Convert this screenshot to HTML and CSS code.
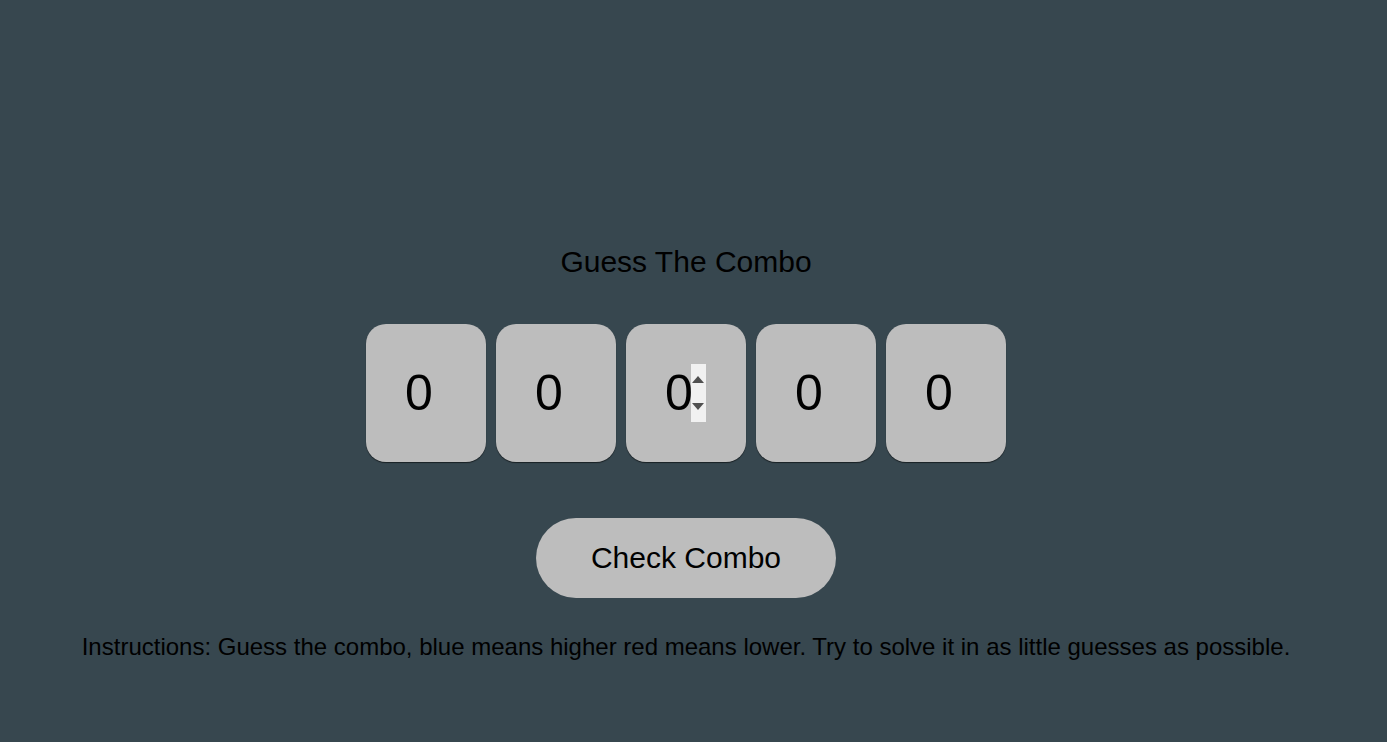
FILE: index.html
```html
<!DOCTYPE html>
<html>
<head>
<meta charset="utf-8">
<link rel="stylesheet" href="styles.css">
</head>
<body>
<main class="page">
  <h1 class="title">Guess The Combo</h1>
  <div class="digits">
    <div class="digit">0</div>
    <div class="digit">0</div>
    <div class="digit">0<span class="spinner"><span class="tri up"></span><span class="tri down"></span></span></div>
    <div class="digit">0</div>
    <div class="digit">0</div>
  </div>
  <button class="check">Check Combo</button>
  <p class="instructions">Instructions: Guess the combo, blue means higher red means lower. Try to solve it in as little guesses as possible.</p>
</main>
</body>
</html>
```
FILE: styles.css
```css
html, body {
  margin: 0;
  padding: 0;
  background: #37474f;
  height: 100%;
}
body {
  font-family: "Liberation Sans", Arial, sans-serif;
  color: #000;
}
.page {
  display: flex;
  flex-direction: column;
  align-items: center;
  padding-right: 15px;
  padding-top: 244px;
}
.title {
  margin: 0;
  font-size: 30px;
  line-height: 36px;
  font-weight: normal;
}
.digits {
  display: flex;
  gap: 10px;
  margin-top: 44px;
}
.digit {
  position: relative;
  width: 120px;
  height: 138px;
  box-sizing: border-box;
  background: #bdbdbd;
  border-radius: 20px;
  box-shadow: 0 1px 1px rgba(0, 0, 0, 0.55);
  display: flex;
  align-items: center;
  justify-content: center;
  padding-right: 14px;
  font-size: 50px;
}
.spinner {
  position: absolute;
  left: 65px;
  top: 40px;
  width: 15px;
  height: 58px;
  background: #f1f1f1;
}
.tri {
  position: absolute;
  left: 1px;
  width: 0;
  height: 0;
  border-left: 6.5px solid transparent;
  border-right: 6.5px solid transparent;
}
.tri.up {
  top: 12px;
  border-bottom: 7px solid #505050;
}
.tri.down {
  top: 39px;
  border-top: 7px solid #505050;
}
.check {
  margin-top: 56px;
  width: 300px;
  height: 80px;
  border: none;
  border-radius: 40px;
  background: #bdbdbd;
  font-family: "Liberation Sans", Arial, sans-serif;
  font-size: 30px;
  color: #000;
  padding: 0;
}
.instructions {
  margin: 35px 0 0;
  font-size: 24px;
  line-height: 28px;
}
```
